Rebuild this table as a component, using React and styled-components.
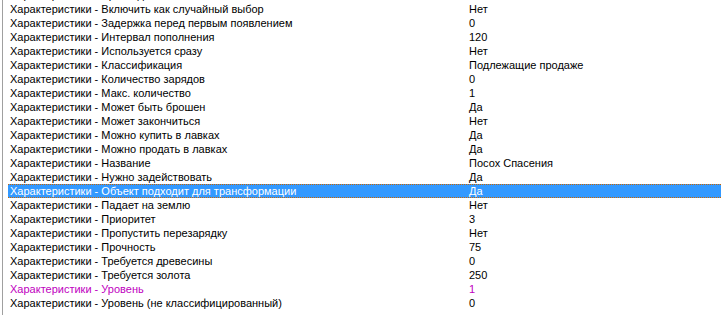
import React from 'react';
import styled, { createGlobalStyle } from 'styled-components';

const rows = [
  { name: 'Время действия', value: '0' },
  { name: 'Включить как случайный выбор', value: 'Нет' },
  { name: 'Задержка перед первым появлением', value: '0' },
  { name: 'Интервал пополнения', value: '120' },
  { name: 'Используется сразу', value: 'Нет' },
  { name: 'Классификация', value: 'Подлежащие продаже' },
  { name: 'Количество зарядов', value: '0' },
  { name: 'Макс. количество', value: '1' },
  { name: 'Может быть брошен', value: 'Да' },
  { name: 'Может закончиться', value: 'Нет' },
  { name: 'Можно купить в лавках', value: 'Да' },
  { name: 'Можно продать в лавках', value: 'Да' },
  { name: 'Название', value: 'Посох Спасения' },
  { name: 'Нужно задействовать', value: 'Да' },
  { name: 'Объект подходит для трансформации', value: 'Да', selected: true },
  { name: 'Падает на землю', value: 'Нет' },
  { name: 'Приоритет', value: '3' },
  { name: 'Пропустить перезарядку', value: 'Нет' },
  { name: 'Прочность', value: '75' },
  { name: 'Требуется древесины', value: '0' },
  { name: 'Требуется золота', value: '250' },
  { name: 'Уровень', value: '1', changed: true },
  { name: 'Уровень (не классифицированный)', value: '0' },
];

export default function App() {
  return (
    <>
      <GlobalStyle />
      <ListView>
        <Rows>
          {rows.map((r) => (
            <Row key={r.name} $selected={r.selected} $changed={r.changed}>
              <NameCell>Характеристики - {r.name}</NameCell>
              <ValueCell>{r.value}</ValueCell>
            </Row>
          ))}
        </Rows>
      </ListView>
    </>
  );
}

const GlobalStyle = createGlobalStyle`
  html, body {
    margin: 0;
    background: #fff;
  }
  body {
    font-family: "Liberation Sans", Arial, sans-serif;
    font-size: 11px;
  }
`;

const ListView = styled.div`
  width: 721px;
  height: 315px;
  overflow: hidden;
  box-sizing: border-box;
  margin-left: 2px;
  border-left: 1px solid #a0a0a0;
  padding-left: 5px;
  background: #fff;
`;

const Rows = styled.div`
  margin-top: -12px;
`;

const Row = styled.div`
  display: flex;
  height: 14px;
  line-height: 14px;
  box-sizing: border-box;
  white-space: nowrap;
  color: ${(p) => (p.$selected ? '#fff' : p.$changed ? '#c000c0' : '#000')};
  background: ${(p) => (p.$selected ? '#3399ff' : 'transparent')};
  border: 1px dotted ${(p) => (p.$selected ? '#cc6600' : 'transparent')};
  border-right: none;
  border-left: none;
`;

const NameCell = styled.div`
  width: 457px;
  padding-left: 2px;
  line-height: 12px;
`;

const ValueCell = styled.div`
  flex: 1;
  padding-left: 2px;
  line-height: 12px;
`;
